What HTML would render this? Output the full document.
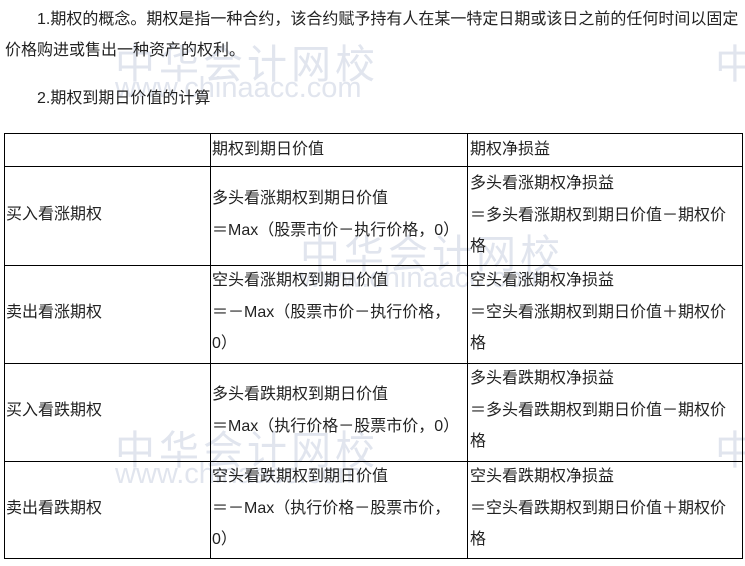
<!DOCTYPE html>
<html><head><meta charset="utf-8"><style>
body{margin:0;width:745px;height:566px;background:#fff;position:relative;overflow:hidden;font-family:"Liberation Sans","Noto Sans CJK SC",sans-serif;font-size:16px;color:#222}
.t{position:absolute;white-space:nowrap;line-height:31.5px}
.wm{position:absolute;color:#e1e5ee;white-space:nowrap;font-family:"Liberation Sans","Noto Sans CJK SC",sans-serif}
.h{position:absolute;background:#000;height:1px;left:4px;width:739px}
.v{position:absolute;background:#000;width:1px;top:133px;height:426px}
</style></head><body>
<div class="wm" style="left:115px;top:32px;font-size:40px;letter-spacing:4px">中华会计网校</div>
<div class="wm" style="left:115px;top:72px;font-size:29px">www.chinaacc.com</div>
<div class="wm" style="left:715px;top:32px;font-size:40px">中</div>
<div class="wm" style="left:300px;top:222px;font-size:40px;letter-spacing:4px">中华会计网校</div>
<div class="wm" style="left:300px;top:262px;font-size:29px">www.chinaacc.com</div>
<div class="wm" style="left:115px;top:418px;font-size:40px;letter-spacing:4px">中华会计网校</div>
<div class="wm" style="left:115px;top:458px;font-size:29px">www.chinaacc.com</div>
<div class="wm" style="left:715px;top:418px;font-size:40px">中</div>

<div class="t" style="left:37px;top:4px">1.期权的概念。期权是指一种合约，该合约赋予持有人在某一特定日期或该日之前的任何时间以固定</div>
<div class="t" style="left:5px;top:35px">价格购进或售出一种资产的权利。</div>
<div class="t" style="left:37px;top:83px">2.期权到期日价值的计算</div>

<div class="h" style="top:133px"></div>
<div class="h" style="top:166px"></div>
<div class="h" style="top:265px"></div>
<div class="h" style="top:363px"></div>
<div class="h" style="top:461px"></div>
<div class="h" style="top:558px"></div>
<div class="v" style="left:4px"></div>
<div class="v" style="left:210px"></div>
<div class="v" style="left:467px"></div>
<div class="v" style="left:742px"></div>

<div class="t" style="left:212px;top:134px">期权到期日价值</div>
<div class="t" style="left:470px;top:134px">期权净损益</div>

<div class="t" style="left:6px;top:199px">买入看涨期权</div>
<div class="t" style="left:212px;top:183px">多头看涨期权到期日价值<br>＝Max（股票市价－执行价格，0）</div>
<div class="t" style="left:470px;top:168px">多头看涨期权净损益<br>＝多头看涨期权到期日价值－期权价<br>格</div>

<div class="t" style="left:6px;top:297px">卖出看涨期权</div>
<div class="t" style="left:212px;top:265px">空头看涨期权到期日价值<br>＝－Max（股票市价－执行价格，<br>0）</div>
<div class="t" style="left:470px;top:265px">空头看涨期权净损益<br>＝空头看涨期权到期日价值＋期权价<br>格</div>

<div class="t" style="left:6px;top:395px">买入看跌期权</div>
<div class="t" style="left:212px;top:379px">多头看跌期权到期日价值<br>＝Max（执行价格－股票市价，0）</div>
<div class="t" style="left:470px;top:363px">多头看跌期权净损益<br>＝多头看跌期权到期日价值－期权价<br>格</div>

<div class="t" style="left:6px;top:493px">卖出看跌期权</div>
<div class="t" style="left:212px;top:461px">空头看跌期权到期日价值<br>＝－Max（执行价格－股票市价，<br>0）</div>
<div class="t" style="left:470px;top:461px">空头看跌期权净损益<br>＝空头看跌期权到期日价值＋期权价<br>格</div>
</body></html>
